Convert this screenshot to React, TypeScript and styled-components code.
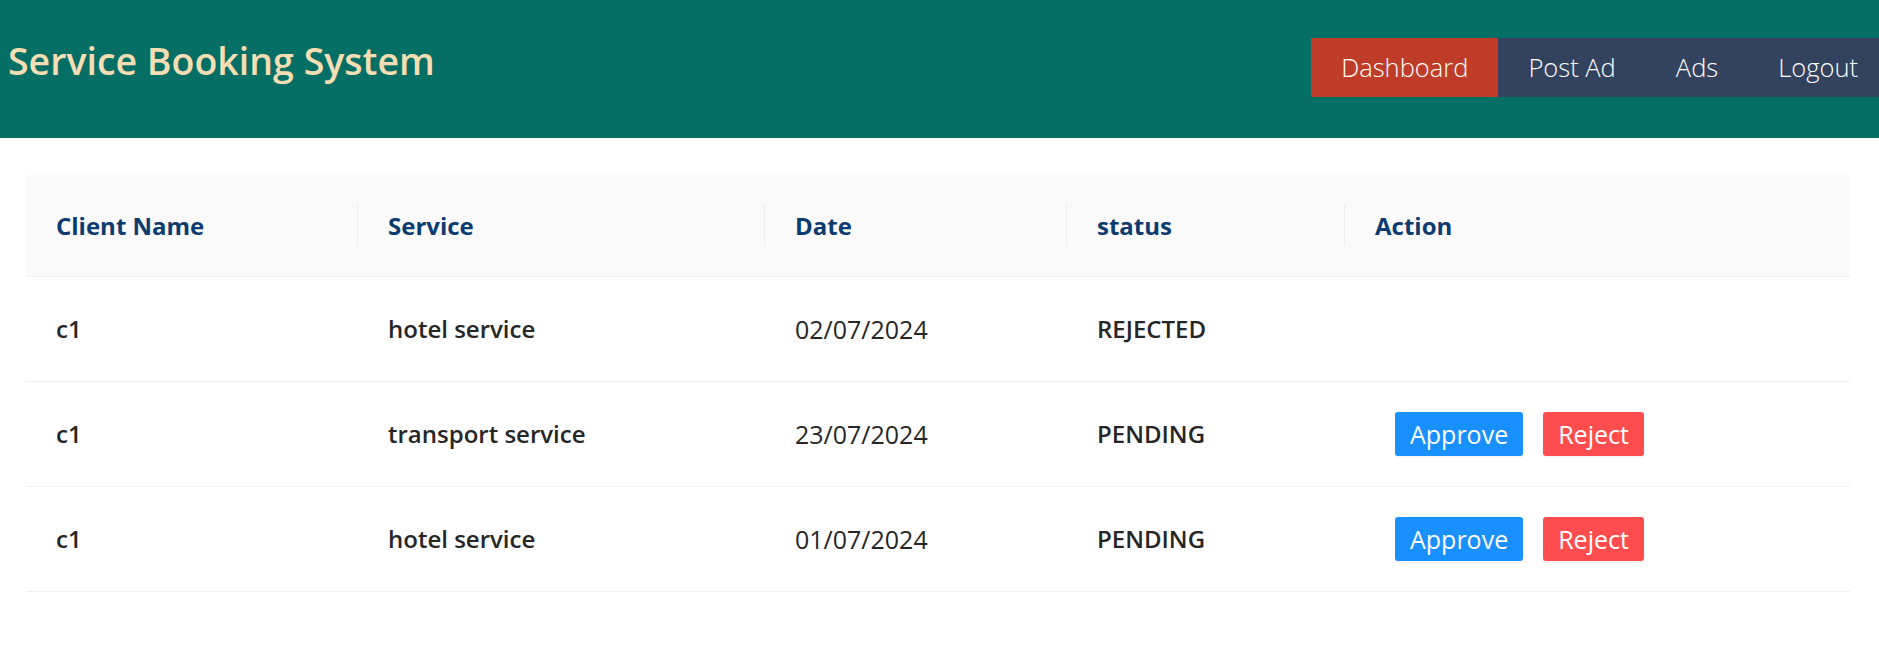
import React from "react";
import styled, { createGlobalStyle } from "styled-components";

const Global = createGlobalStyle`
  html, body { margin: 0; padding: 0; background: #ffffff; }
  body { font-family: "Open Sans", "Noto Sans", "Liberation Sans", sans-serif; }
  *, *::before, *::after { box-sizing: border-box; }
`;

const Header = styled.header`
  height: 138px;
  background: #056f66;
  display: flex;
  align-items: flex-start;
  justify-content: space-between;
  overflow: hidden;
`;

const Title = styled.h1`
  margin: 37px 0 0 8px;
  font-size: 37.5px;
  line-height: 48px;
  font-weight: 600;
  color: #f5deb3;
  white-space: nowrap;
`;

const Nav = styled.nav`
  margin-top: 38px;
  display: flex;
  background: #33425f;
  flex-shrink: 0;
`;

const NavItem = styled.a<{ $active?: boolean }>`
  display: block;
  height: 59px;
  line-height: 59px;
  padding: 0 30px;
  font-size: 25.5px;
  font-weight: 300;
  color: #ffffff;
  text-decoration: none;
  background: ${(p) => (p.$active ? "#bf3c28" : "#33425f")};
  white-space: nowrap;
  &:last-child {
    padding-right: 21px;
  }
`;

const Main = styled.main`
  padding: 37px 29px 0 26px;
`;

const Table = styled.table`
  width: 100%;
  border-collapse: collapse;
  table-layout: fixed;
`;

const Th = styled.th<{ $w?: number; $sep?: boolean }>`
  position: relative;
  width: ${(p) => (p.$w ? `${p.$w}px` : "auto")};
  height: 101px;
  padding: 0 0 0 30px;
  background: #fafafa;
  border-bottom: 1px solid #f0f0f0;
  text-align: left;
  font-size: 24px;
  font-weight: 700;
  color: #0b3b6f;
  &::before {
    content: "";
    display: ${(p) => (p.$sep ? "block" : "none")};
    position: absolute;
    right: 0;
    top: 50%;
    width: 1px;
    height: 41px;
    transform: translateY(-50%);
    background: #ececec;
  }
`;

const Td = styled.td<{ $bold?: boolean }>`
  height: 105px;
  padding: 0 0 0 30px;
  border-bottom: 1px solid #f0f0f0;
  font-size: ${(p) => (p.$bold ? "24px" : "25px")};
  font-weight: ${(p) => (p.$bold ? 600 : 400)};
  color: #262626;
  white-space: nowrap;
`;

const Actions = styled.div`
  display: flex;
  gap: 20px;
  margin-left: 20px;
`;

const Button = styled.button<{ $kind: "approve" | "reject" }>`
  height: 44px;
  padding: 0 15px;
  border: none;
  border-radius: 3px;
  font-family: inherit;
  font-size: 25px;
  font-weight: 400;
  color: #ffffff;
  background: ${(p) => (p.$kind === "approve" ? "#1890ff" : "#ff4d4f")};
  box-shadow: 0 2px 0 rgba(0, 0, 0, 0.045);
  cursor: pointer;
`;

type Booking = { client: string; service: string; date: string; status: string };

const rows: Booking[] = [
  { client: "c1", service: "hotel service", date: "02/07/2024", status: "REJECTED" },
  { client: "c1", service: "transport service", date: "23/07/2024", status: "PENDING" },
  { client: "c1", service: "hotel service", date: "01/07/2024", status: "PENDING" },
];

export default function App() {
  return (
    <>
      <Global />
      <Header>
        <Title>Service Booking System</Title>
        <Nav>
          <NavItem $active>Dashboard</NavItem>
          <NavItem>Post Ad</NavItem>
          <NavItem>Ads</NavItem>
          <NavItem>Logout</NavItem>
        </Nav>
      </Header>
      <Main>
        <Table>
          <thead>
            <tr>
              <Th $w={332} $sep>Client Name</Th>
              <Th $w={407} $sep>Service</Th>
              <Th $w={302} $sep>Date</Th>
              <Th $w={278} $sep>status</Th>
              <Th>Action</Th>
            </tr>
          </thead>
          <tbody>
            {rows.map((r, i) => (
              <tr key={i}>
                <Td $bold>{r.client}</Td>
                <Td $bold>{r.service}</Td>
                <Td>{r.date}</Td>
                <Td $bold>{r.status}</Td>
                <Td>
                  {r.status === "PENDING" && (
                    <Actions>
                      <Button $kind="approve">Approve</Button>
                      <Button $kind="reject">Reject</Button>
                    </Actions>
                  )}
                </Td>
              </tr>
            ))}
          </tbody>
        </Table>
      </Main>
    </>
  );
}
